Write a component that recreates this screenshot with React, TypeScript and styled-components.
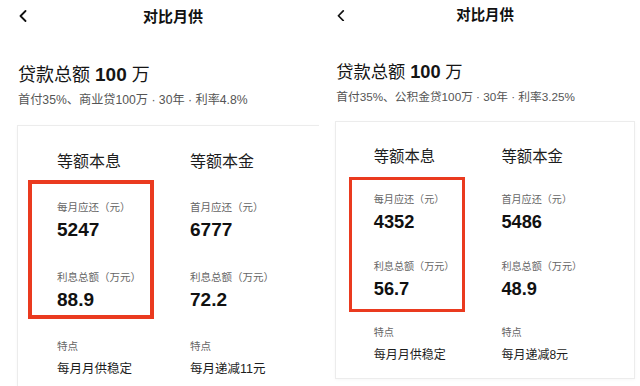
import React from 'react';
import styled, { createGlobalStyle } from 'styled-components';

const Global = createGlobalStyle`
  html, body { margin: 0; padding: 0; background: #fff; }
  body { width: 640px; height: 386px; overflow: hidden; }
`;

const s = (n: number) => `calc(${n}px * var(--s))`;

const Stage = styled.div`
  display: flex;
  width: 640px;
  height: 386px;
  overflow: hidden;
  background: #fff;
  font-family: "Liberation Sans", "Noto Sans CJK SC", sans-serif;
  color: #111;
`;

const Frame = styled.div<{ $w?: number }>`
  ${(p) => (p.$w ? `width:${p.$w}px; flex:none;` : 'flex:1;')}
  height: 100%;
  overflow: hidden;
`;

const Phone = styled.div<{ $s: number }>`
  --s: ${(p) => p.$s};
  width: ${s(346)};
  display: flex;
  flex-direction: column;
`;

const Header = styled.div`
  height: ${s(32)};
  display: grid;
  grid-template-columns: 1fr auto 1fr;
  align-items: center;
`;

const Back = styled.div`
  padding-left: ${s(19)};
  display: flex;
  align-items: center;
  svg { width: ${s(8)}; height: ${s(12)}; display: block; }
`;

const Title = styled.div`
  font-size: ${s(15)};
  font-weight: 700;
  color: #111;
  line-height: 1;
`;

const Summary = styled.div`
  margin-top: ${s(31)};
  padding: 0 ${s(18)};
`;

const Headline = styled.div`
  font-size: ${s(18)};
  line-height: ${s(24)};
  color: #151515;
  b { font-size: ${s(19)}; font-weight: 700; }
`;

const Sub = styled.div`
  margin-top: ${s(5)};
  font-size: ${s(12.2)};
  line-height: ${s(16)};
  color: #555;
  white-space: nowrap;
`;

const Card = styled.div`
  margin: ${s(17)} ${s(17)} 0;
  border: 1px solid #ececec;
  box-shadow: 0 1px 3px rgba(0, 0, 0, 0.03);
  padding: ${s(25)} 0 ${s(15)} ${s(39)};
  display: grid;
  grid-template-columns: ${s(133)} ${s(133)};
`;

const Column = styled.div`
  display: flex;
  flex-direction: column;
`;

const ColTitle = styled.div`
  font-size: ${s(16)};
  line-height: ${s(22)};
  color: #1d1d1d;
`;

const Group = styled.div<{ $box?: [number, number, number, number] }>`
  position: relative;
  margin-top: ${s(27)};
  display: flex;
  flex-direction: column;
  ${(p) =>
    p.$box
      ? `&::after {
    content: '';
    position: absolute;
    top: ${s(-p.$box[0])};
    left: ${s(-p.$box[3])};
    width: ${s(p.$box[1])};
    bottom: ${s(-p.$box[2])};
    border: ${s(4)} solid #ea3a1f;
    box-sizing: border-box;
  }`
      : ''}
`;

const Label = styled.div<{ $gap?: boolean }>`
  font-size: ${s(10.5)};
  line-height: ${s(14)};
  color: #666;
  margin-top: ${(p) => (p.$gap ? s(28) : '0')};
`;

const Value = styled.div`
  margin-top: ${s(4)};
  font-size: ${s(19)};
  line-height: ${s(24)};
  font-weight: 700;
  color: #111;
`;

const FeatureLabel = styled.div`
  margin-top: ${s(27)};
  font-size: ${s(10.5)};
  line-height: ${s(14)};
  color: #666;
`;

const Feature = styled.div`
  margin-top: ${s(7)};
  font-size: ${s(12.5)};
  line-height: ${s(18)};
  color: #1d1d1d;
`;

type ColData = { name: string; first: string; firstVal: string; interest: string; feature: string };

type PanelData = {
  scale: number;
  sub: string;
  box: [number, number, number, number];
  cols: [ColData, ColData];
};

const panels: PanelData[] = [
  {
    scale: 1,
    sub: '首付35%、商业贷100万 · 30年 · 利率4.8%',
    box: [20, 126, 7, 29],
    cols: [
      { name: '等额本息', first: '每月应还（元）', firstVal: '5247', interest: '88.9', feature: '每月月供稳定' },
      { name: '等额本金', first: '首月应还（元）', firstVal: '6777', interest: '72.2', feature: '每月递减11元' },
    ],
  },
  {
    scale: 0.96,
    sub: '首付35%、公积金贷100万 · 30年 · 利率3.25%',
    box: [17, 121, 12, 26],
    cols: [
      { name: '等额本息', first: '每月应还（元）', firstVal: '4352', interest: '56.7', feature: '每月月供稳定' },
      { name: '等额本金', first: '首月应还（元）', firstVal: '5486', interest: '48.9', feature: '每月递减8元' },
    ],
  },
];

const Panel = ({ data }: { data: PanelData }) => (
  <Phone $s={data.scale}>
    <Header>
      <Back>
        <svg viewBox="0 0 8 12" fill="none">
          <path d="M6.5 1 L1.5 6 L6.5 11" stroke="#111" strokeWidth="1.8" strokeLinecap="round" strokeLinejoin="round" />
        </svg>
      </Back>
      <Title>对比月供</Title>
      <div />
    </Header>
    <Summary>
      <Headline>
        贷款总额 <b>100</b> 万
      </Headline>
      <Sub>{data.sub}</Sub>
    </Summary>
    <Card>
      {data.cols.map((c, i) => (
        <Column key={c.name}>
          <ColTitle>{c.name}</ColTitle>
          <Group $box={i === 0 ? data.box : undefined}>
            <Label>{c.first}</Label>
            <Value>{c.firstVal}</Value>
            <Label $gap>利息总额（万元）</Label>
            <Value>{c.interest}</Value>
          </Group>
          <FeatureLabel>特点</FeatureLabel>
          <Feature>{c.feature}</Feature>
        </Column>
      ))}
    </Card>
  </Phone>
);

export default function App() {
  return (
    <>
      <Global />
      <Stage>
        <Frame $w={319}>
          <Panel data={panels[0]} />
        </Frame>
        <Frame>
          <Panel data={panels[1]} />
        </Frame>
      </Stage>
    </>
  );
}
